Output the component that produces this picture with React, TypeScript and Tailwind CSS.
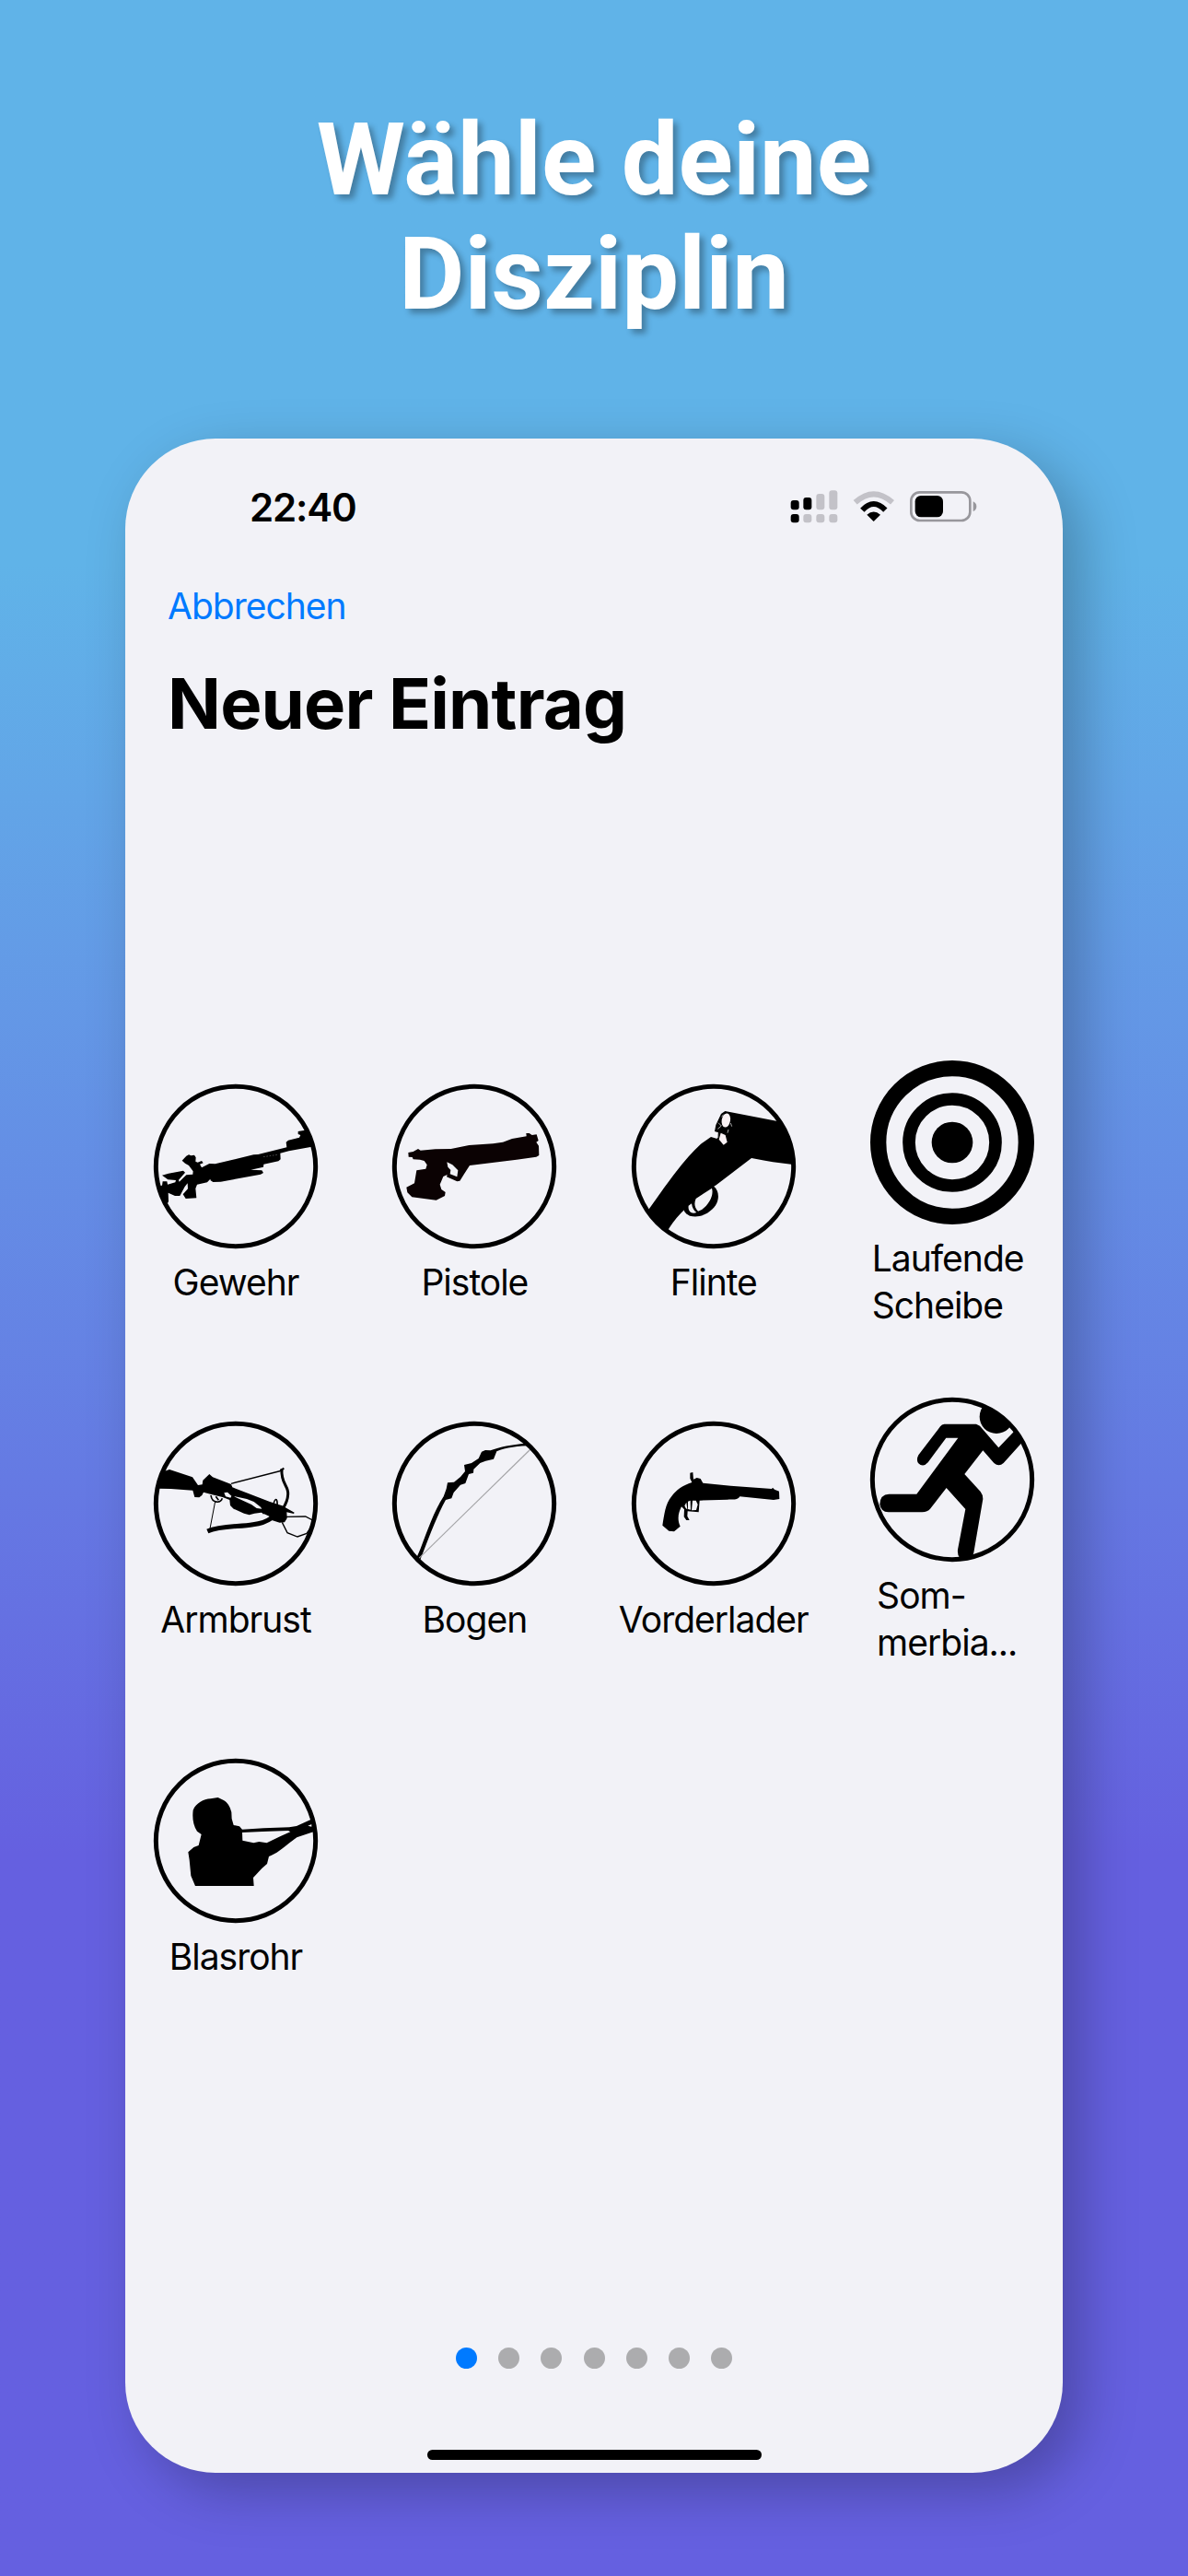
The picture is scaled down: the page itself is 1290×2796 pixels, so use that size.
import type { ReactNode } from "react";

type IconProps = {
  id: string;
  cx: number;
  cy: number;
  children: ReactNode;
};

// round badge: the silhouette is clipped to the ring
const RingIcon = ({ id, cx, cy, children }: IconProps) => (
  <svg
    viewBox="-267 -267 534 534"
    className="size-[178px] shrink-0 overflow-visible"
    fill="black"
    stroke="none"
  >
    <clipPath id={id}>
      <circle r="262" />
    </clipPath>
    <g clipPath={`url(#${id})`}>
      <g transform={`translate(${-cx} ${-cy})`}>{children}</g>
    </g>
    <circle r="260" fill="none" stroke="black" strokeWidth="15" />
  </svg>
);

const Rifle = () => (
  <RingIcon id="rifle" cx={289} cy={286}>
    <path d="M114 267 L128 252 L136 248 L143 251 L154 249 L159 257 L158 270 L165 273 L178 268 L183 275 L172 279 L178 290 L203 277 L222 278 L347 248 L362 247 L455 224 L453 207 L460 201 L496 192 L500 184 L492 181 L492 172 L515 168 L560 172 L560 218 L462 236 L434 243 L435 263 L428 269 L380 279 L379 288 L338 297 L374 299 L379 307 L370 312 L240 336 L215 337 L207 332 L206 327 L196 338 L163 345 L158 358 L161 389 L126 391 L117 377 L133 359 L132 341 L123 352 L107 382 L91 382 L69 372 L70 400 L60 420 L40 380 L38 350 L49 348 L51 335 L65 335 L67 345 L92 338 L94 331 L68 329 L49 315 L70 309 L118 300 L124 306 L103 330 L105 336 L128 314 L149 312 L150 302 L136 283 L124 276 Z" />
    <path
      d="M379 255 L425 248"
      stroke="#f2f2f7"
      strokeWidth="2"
      strokeDasharray="5 5"
      opacity=".45"
    />
  </RingIcon>
);

const Pistol = () => (
  <RingIcon id="pistol" cx={287} cy={286}>
    <path
      fill="#0b0203"
      fillRule="evenodd"
      d="M72 241 L88 238 L104 229 L112 234 L160 230 L211 229 L270 217 L348 212 L380 207 L410 196 L457 188 L456 178 L466 178 L475 184 L490 182 L496 202 L489 207 L497 219 L498 250 L489 255 L425 264 L272 283 L255 309 L240 333 L231 335 L197 320 L199 313 L186 319 L175 345 L180 361 L193 370 L191 382 L163 396 L84 386 L69 371 L66 354 L92 341 L99 299 L129 294 L133 281 L124 268 L110 264 L88 263 L85 256 L73 255 Z M198 272 L201 288 L210 298 L208 311 L231 320 L234 299 L216 281 Z"
    />
  </RingIcon>
);

const Shotgun = () => (
  <RingIcon id="shotgun" cx={285} cy={286}>
    <path d="M60 445 C110 375 180 270 243 213 L276 190 L296 196 L300 176 L288 172 L292 151 L309 115 L322 106 L497 140 L560 160 L560 282 L478 272 L452 267 L408 259 L294 346 C225 390 160 445 130 505 Z" />
    <path d="M190 400 L284 350 C303 365 304 392 291 413 C272 440 240 455 207 447 C198 443 192 438 188 430 Z" />
    <path
      d="M227 391 L279 357 C286 380 270 410 246 427 L234 432 C221 420 221 404 227 391 Z M203 414 L213 407 C215 422 221 431 229 436 C214 443 200 433 203 414 Z"
      fill="#f2f2f7"
    />
    <ellipse
      cx="325"
      cy="136"
      rx="14"
      ry="23"
      fill="#faf2f4"
      transform="rotate(10 325 136)"
    />
    <path d="M308 177 L323 184 L329 207 L317 216 L302 198 Z" fill="#faf2f4" />
    <path
      d="M300 144 L310 154 L298 164 M340 145 L344 156 M333 166 L330 177 M299 179 L299 193 M311 125 L317 117"
      fill="none"
      stroke="#aaa"
      strokeWidth="3"
    />
  </RingIcon>
);

const Target = () => (
  <svg
    viewBox="-267 -267 534 534"
    className="size-[178px] shrink-0"
    fill="none"
    stroke="black"
  >
    <circle r="241" strokeWidth="52" />
    <circle r="141" strokeWidth="41" />
    <circle r="67" fill="black" stroke="none" />
  </svg>
);

const Crossbow = () => (
  <RingIcon id="crossbow" cx={289} cy={289}>
    <path d="M38 188 L62 182 L73 178 L148 203 L166 229 L180 227 L182 213 L203 193 L214 203 L274 226 L278 236 L400 283 L440 296 L480 318 L478 322 L455 317 L456 337 L448 350 L432 351 L404 342 L398 330 L372 318 L350 321 L333 326 L316 321 L282 306 L271 295 L269 277 L246 268 L212 260 L184 252 L179 262 L170 269 L155 268 L149 246 L78 241 L40 240 Z" />
    <path
      d="M251 254 L262 252 L275 264 L272 270 L256 266 Z M282 265 L325 274 L348 283 L370 300 L374 306 L357 304 L340 292 Z"
      fill="#f2f2f7"
    />
    <g fill="none" stroke="black">
      <path
        d="M197 379 C240 360 300 365 345 357 C370 354 390 347 405 336"
        strokeWidth="15"
      />
      <path
        d="M439 176 C435 225 463 232 459 260 C458 280 451 292 443 304"
        strokeWidth="9"
      />
      <path d="M434 182 L446 174" strokeWidth="6" />
      <path d="M274 224 L441 181" strokeWidth="4" />
      <path d="M222 282 L204 376" strokeWidth="3" />
      <path
        d="M208 262 C212 290 240 288 245 272 M224 266 L233 278"
        strokeWidth="5"
      />
      <path
        d="M411 298 C415 270 426 266 424 298 M379 303 L379 323"
        strokeWidth="5"
      />
      <path
        d="M452 332 L516 331 L545 346 M440 350 L457 384 L490 397 L520 386 L540 358"
        strokeWidth="4"
      />
    </g>
  </RingIcon>
);

const Bow = () => (
  <RingIcon id="bow" cx={287} cy={289}>
    <path d="M97 470 L112 435 C135 376 155 315 187 266 L196 241 L200 221 L221 219 L242 202 L257 184 L254 163 L278 157 L301 142 L311 120 L323 115 L340 116 C370 104 410 97 453 93 L475 96 L475 101 C430 101 390 106 360 119 L350 144 L324 150 L306 157 L285 177 L284 189 L269 193 L258 223 L242 228 L220 253 L213 272 L194 277 C168 324 145 385 124 438 L110 474 Z" />
    <path
      d="M106 468 L470 112"
      fill="none"
      stroke="#a3a3a6"
      strokeWidth="3.5"
    />
  </RingIcon>
);

const Muzzleloader = () => (
  <RingIcon id="muzzleloader" cx={285} cy={289}>
    <path d="M208 189 L217 187 L219 210 L230 205 L242 208 L250 222 L340 231 L474 241 L477 237 L483 243 L498 249 L499 274 L480 277 L370 266 C362 279 350 275 330 276 L239 279 L236 317 L200 314 L199 330 L206 343 L196 343 L188 332 L189 308 L180 299 C170 318 165 340 176 363 L156 380 L139 378 L118 360 C124 325 127 290 148 265 C163 244 185 229 214 220 L208 207 Z" />
    <path
      d="M190 296 L196 285 L199 308 L194 304 Z M201 282 L209 279 L210 309 L201 307 Z M216 279 L227 279 L233 292 L228 310 L213 311 Z"
      fill="#f2f2f7"
    />
  </RingIcon>
);

const Runner = () => (
  <RingIcon id="runner" cx={298} cy={302}>
    <circle cx="442" cy="97" r="55" />
    <path d="M272 121 L376 121 L388 127 L449 198 L510 134 L540 165 L465 248 Q450 262 434 248 L398 207 L338 284 L390 341 Q398 351 398 365 L368 540 Q362 565 340 565 Q313 560 316 530 L341 398 L279 329 L226 397 Q218 407 200 408 L90 408 Q65 406 62 382 Q63 350 92 349 L182 349 L317 166 L278 166 L219 246 Q203 264 187 248 Q180 237 188 222 L259 129 Q264 121 272 121 Z" />
  </RingIcon>
);

const Blowgun = () => (
  <RingIcon id="blowgun" cx={289} cy={291}>
    <path d="M177 270 L163 260 C150 240 147 217 150 191 C160 168 184 155 207 154 L231 150 L248 158 C263 166 270 178 275 198 L276 219 L282 240 L301 244 L310 254 L380 250 L463 247 L487 243 L535 221 L560 215 L560 256 L488 280 L462 299 C443 315 420 333 397 342 L391 366 L374 381 L346 411 L348 438 L157 438 L143 405 L138 353 L134 328 L152 312 L168 306 Z" />
    <path
      d="M310 264 L376 261 L460 258 L467 262 L435 276 L390 298 L365 294 L347 298 L311 290 Z M524 242 L538 236 L536 245 Z"
      fill="#f2f2f7"
    />
  </RingIcon>
);

const disciplines = [
  { icon: <Rifle />, label: "Gewehr" },
  { icon: <Pistol />, label: "Pistole" },
  { icon: <Shotgun />, label: "Flinte" },
  { icon: <Target />, label: "Laufende\nScheibe", shift: "pr-[10px]" },
  { icon: <Crossbow />, label: "Armbrust" },
  { icon: <Bow />, label: "Bogen" },
  { icon: <Muzzleloader />, label: "Vorderlader" },
  { icon: <Runner />, label: "Som-\nmerbia...", shift: "pr-[12px]" },
  { icon: <Blowgun />, label: "Blasrohr" },
];

const StatusIcons = () => (
  <svg viewBox="0 0 690 180" className="h-[60px] w-[230px]">
    <g fill="#c3c2c8">
      <rect x="139" y="48" width="27" height="52" rx="9" />
      <rect x="181" y="37" width="27" height="63" rx="9" />
      <rect x="97" y="114" width="27" height="28" rx="9" />
      <rect x="139" y="114" width="27" height="28" rx="9" />
      <rect x="181" y="114" width="27" height="28" rx="9" />
    </g>
    <rect x="56" y="69" width="27" height="31" rx="9" />
    <rect x="97" y="60" width="27" height="40" rx="9" />
    <rect x="56" y="114" width="27" height="28" rx="9" />
    <g fill="none">
      <path d="M266 76 Q326 22 387 76" stroke="#c3c2c8" strokeWidth="18" />
      <path d="M289 101 Q326 61 364 101" stroke="black" strokeWidth="18" />
    </g>
    <path d="M304 116 Q326 97 348 116 L326 138 Z" />
    <rect
      x="448"
      y="43"
      width="192"
      height="92"
      rx="28"
      fill="none"
      stroke="#98979c"
      strokeWidth="8"
    />
    <rect x="461" y="54" width="91" height="70" rx="19" />
    <path d="M650 73 Q661 78 661 89 Q661 100 650 105 Z" fill="#98979c" />
  </svg>
);

export default function App() {
  return (
    <main className="flex h-[2796px] w-[1290px] flex-col items-center overflow-hidden bg-linear-to-b from-[#60b3e8] from-22% to-[#6560e0] to-72% font-['Inter',sans-serif] text-black">
      <h1 className="mt-[112px] text-center font-['Roboto',sans-serif] text-[110px] leading-[124px] font-bold text-white [text-shadow:5px_5px_6px_rgba(0,0,0,0.3)]">
        Wähle deine
        <br />
        Disziplin
      </h1>

      <section className="mt-[116px] flex h-[2208px] w-[1018px] flex-col rounded-[98px] bg-[#f2f2f7] shadow-[20px_20px_60px_rgba(0,0,0,0.25)]">
        <header className="mt-[44px] flex h-[60px] items-center justify-between pr-[84px] pl-[135px]">
          <span className="text-[42px] font-semibold tracking-[-1.2px]">
            22:40
          </span>
          <StatusIcons />
        </header>

        <div className="mt-[48px] pl-[46px]">
          <button className="block text-[39px] leading-[60px] tracking-[-1px] text-[#007aff]">
            Abbrechen
          </button>
          <h2 className="mt-[30px] text-[76px] leading-[90px] font-bold tracking-[-0.8px]">
            Neuer Eintrag
          </h2>
        </div>

        <div className="mt-[343px] grid auto-rows-[291px] grid-cols-[repeat(4,210px)] gap-x-[49.4px] gap-y-[75px] pl-[15px]">
          {disciplines.map((d) => (
            <button
              key={d.label}
              className="flex flex-col items-center justify-center gap-[11px]"
            >
              {d.icon}
              <span
                className={`text-left text-[39px] leading-[51px] tracking-[-1px] whitespace-pre ${d.shift ?? ""}`}
              >
                {d.label}
              </span>
            </button>
          ))}
        </div>

        <div className="mt-auto flex justify-center gap-[23.3px]">
          <span className="size-[23px] rounded-full bg-[#007aff]" />
          {[1, 2, 3, 4, 5, 6].map((n) => (
            <span key={n} className="size-[23px] rounded-full bg-[#acacae]" />
          ))}
        </div>
        <div className="mt-[88px] mb-[14px] h-[11px] w-[363px] self-center rounded-full bg-black" />
      </section>
    </main>
  );
}
